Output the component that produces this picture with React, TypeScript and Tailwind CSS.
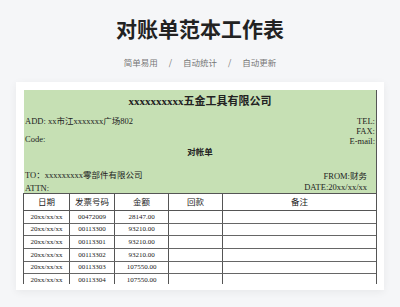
const sheetFont = { fontFamily: "'Liberation Serif', 'Noto Sans CJK SC', serif" };

const rows = [
  { date: "20xx/xx/xx", no: "00472009", amount: "28147.00", h: "h-[13px]" },
  { date: "20xx/xx/xx", no: "00113300", amount: "93210.00", h: "h-[12px]" },
  { date: "20xx/xx/xx", no: "00113301", amount: "93210.00", h: "h-[13px]" },
  { date: "20xx/xx/xx", no: "00113302", amount: "93210.00", h: "h-[13px]" },
  { date: "20xx/xx/xx", no: "00113303", amount: "107550.00", h: "h-[12px]" },
  { date: "20xx/xx/xx", no: "00113304", amount: "107550.00", h: "h-[13px]" },
];

const cols = "grid grid-cols-[46px_45px_54px_54px_1fr]";

export default function App() {
  return (
    <div
      className="w-[400px] h-[307px] bg-[#f5f6f8] flex flex-col items-center overflow-hidden"
      style={{ fontFamily: "'Noto Sans CJK SC', 'Noto Sans', sans-serif" }}
    >
      <h1 className="mt-[14px] text-[21px] leading-[28px] font-bold text-[#222]">对账单范本工作表</h1>
      <div className="mt-[13px] flex items-center text-[8.5px] leading-[14px] text-[#777]">
        <span>简单易用</span>
        <span className="mx-[11px]">/</span>
        <span>自动统计</span>
        <span className="mx-[11px]">/</span>
        <span>自动更新</span>
      </div>

      <div className="mt-[13px] w-[368px] h-[208px] bg-white shadow-[0_2px_8px_rgba(0,0,0,0.06)] px-[7px] pt-[8px] pb-[6px]">
        <div className="h-[194px] overflow-hidden border-r border-[#555] text-[#222]" style={sheetFont}>
          {/* header block */}
          <div className="ml-[1px] bg-[#c6e0b4] h-[103px] flex flex-col text-[8.5px]">
            <div className="h-[26px] flex justify-center">
              <span className="text-[11px] leading-[22px] font-bold">xxxxxxxxxx五金工具有限公司</span>
            </div>
            <div className="h-[10px] flex justify-between items-center pl-[1px] pr-[1px]">
              <span>ADD: xx市江xxxxxxx广场802</span>
              <span>TEL:</span>
            </div>
            <div className="h-[10px] flex justify-end items-center pr-[1px]">
              <span>FAX:</span>
            </div>
            <div className="h-[10px] flex justify-between items-center pl-[1px] pr-[1px]">
              <span className="-mt-[3px]">Code:</span>
              <span>E-mail:</span>
            </div>
            <div className="h-[13px] flex justify-center items-center">
              <span className="font-bold">对帐单</span>
            </div>
            <div className="h-[11px]" />
            <div className="h-[12px] flex justify-between items-center pl-[1px] pr-[9px]">
              <span className="-mt-[1px]">TO：xxxxxxxxx零部件有限公司</span>
              <span>FROM:财务</span>
            </div>
            <div className="h-[11px] flex justify-between items-center pl-[1px] pr-[9px]">
              <span className="mt-[1px]">ATTN:</span>
              <span>DATE:20xx/xx/xx</span>
            </div>
          </div>

          {/* table */}
          <div className="border-t border-l border-[#555]">
            <div className={`${cols} h-[17px] border-b border-[#555] text-[8.5px]`}>
              <div className="border-r border-[#555] flex items-end justify-center pb-[1px]">日期</div>
              <div className="border-r border-[#555] flex items-end justify-center pb-[1px]">发票号码</div>
              <div className="border-r border-[#555] flex items-end justify-center pb-[1px]">金额</div>
              <div className="border-r border-[#555] flex items-end justify-center pb-[1px]">回款</div>
              <div className="flex items-end justify-center pb-[1px]">备注</div>
            </div>
            {rows.map((r, i) => (
              <div key={i} className={`${cols} ${r.h} border-b border-[#666] text-[7px]`}>
                <div className="border-r border-[#555] flex items-center justify-center">{r.date}</div>
                <div className="border-r border-[#555] flex items-center justify-center">{r.no}</div>
                <div className="border-r border-[#555] flex items-center justify-center">{r.amount}</div>
                <div className="border-r border-[#555]" />
                <div />
              </div>
            ))}
          </div>
        </div>
      </div>
    </div>
  );
}
